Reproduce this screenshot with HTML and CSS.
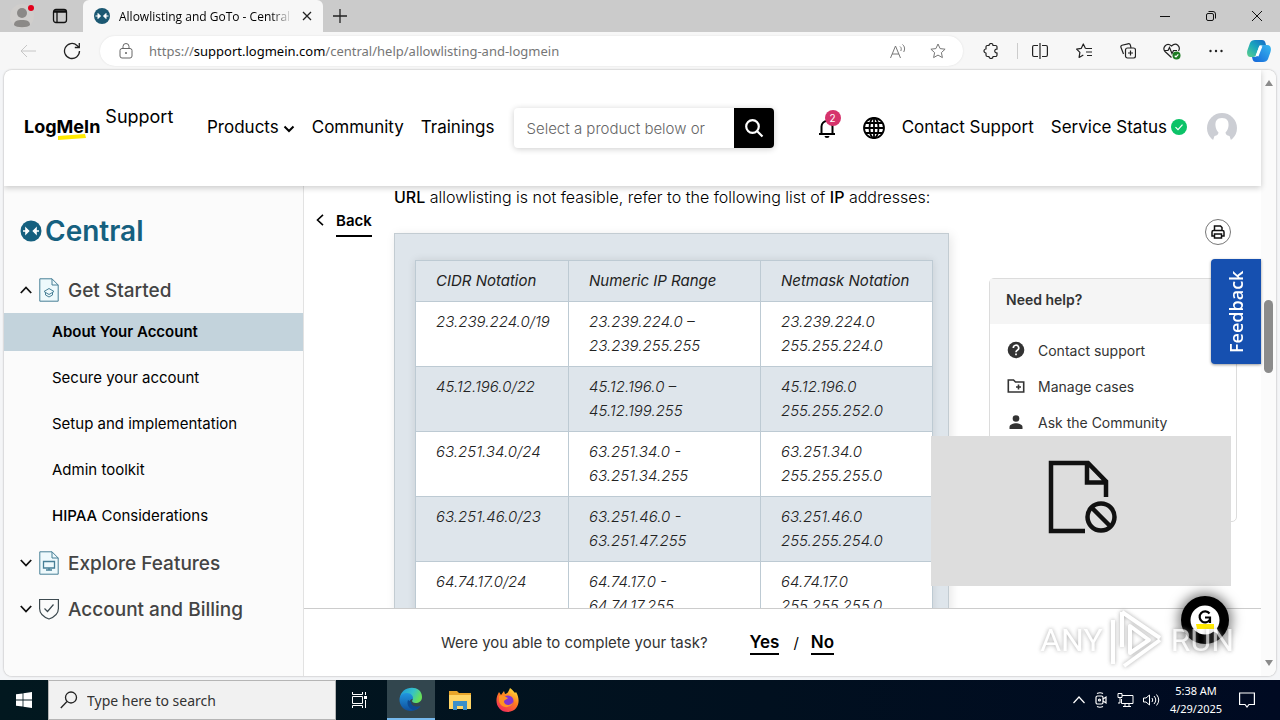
FILE: index.html
```html
<!DOCTYPE html>
<html lang="en">
<head>
    <meta charset="UTF-8">
    <meta name="viewport" content="width=device-width, initial-scale=1.0">
    <title>Allowlisting and GoTo - Central Support</title>
    <link rel="stylesheet" href="styles.css">
</head>
<body>
    <!-- Tab strip -->
    <div class="tab-strip">
        <button class="strip-button profile" aria-label="Profile">
            <svg width="24" height="28" viewBox="0 0 24 28"><circle cx="12" cy="14" r="12" fill="#d0cecc"/><circle cx="12" cy="11" r="5" fill="#8b8987"/><path d="M4 23c0-4 3-5 8-5s8 1 8 5c-2 3-14 3-16 0z" fill="#8b8987"/><circle cx="21" cy="6" r="3" fill="#e3001b"/></svg>
        </button>
        <button class="strip-button" aria-label="Tab actions">
            <svg width="16" height="16" viewBox="0 0 16 16" fill="none" stroke="#111" stroke-width="1.3"><rect x="1.5" y="1.5" width="13" height="13" rx="2.5"/><path d="M1.5 4h13M2 3h12M5 4v10"/></svg>
        </button>
        <div class="tab">
            <svg width="16" height="16" viewBox="0 0 16 16"><circle cx="8" cy="8" r="8" fill="#1b5872"/><path d="M1.500 8H6M4 5.500L6.500 8 4 10.500zM14.500 8H10M12 5.500L9.500 8l2.500 2.500z" fill="#fff" stroke="#fff"/></svg>
            <span class="tab-title">Allowlisting and GoTo - Central Support</span>
            <button class="tab-close" aria-label="Close tab">
                <svg width="10" height="10" viewBox="0 0 10 10" stroke="#222" stroke-width="1.3"><path d="M1 1l8 8M9 1l-8 8"/></svg>
            </button>
        </div>
        <button class="new-tab" aria-label="New tab">
            <svg width="14" height="14" viewBox="0 0 14 14" stroke="#222" stroke-width="1.3"><path d="M7 0v14M0 7h14"/></svg>
        </button>
        <div class="window-buttons">
            <button aria-label="Minimize"><svg width="10" height="10" viewBox="0 0 10 10" stroke="#111"><path d="M0 5.500h10"/></svg></button>
            <button aria-label="Restore"><svg width="10" height="10" viewBox="0 0 10 10" fill="none" stroke="#111"><rect x=".5" y="2.500" width="7" height="7" rx="1.500"/><path d="M2.500 .5H7a2.500 2.500 0 0 1 2.500 2.500v4.500"/></svg></button>
            <button aria-label="Close"><svg width="10" height="10" viewBox="0 0 10 10" stroke="#111"><path d="M0 0l10 10M10 0L0 10"/></svg></button>
        </div>
    </div>

    <!-- Toolbar -->
    <div class="toolbar">
        <button class="tool back-tool" aria-label="Back"><svg width="16" height="14" viewBox="0 0 16 14" fill="none" stroke="#c6c6c6"><path d="M16 7H1M7 1L1 7l6 6"/></svg></button>
        <button class="tool" aria-label="Refresh"><svg width="18" height="18" viewBox="0 0 18 18" fill="none" stroke="#222" stroke-width="1.300"><path d="M16.500 9A7.500 7.500 0 1 1 14 3.400l2 2M16.300 1v4.500h-4.500"/></svg></button>
        <div class="address">
            <svg width="14" height="16" viewBox="0 0 14 16" fill="none" stroke="#666"><rect x="1" y="5.500" width="12" height="9.500" rx="2"/><path d="M4 5.500V3.500a3 3 0 0 1 6 0v2"/><circle cx="7" cy="10" r=".6" fill="#666"/></svg>
            <a class="url" href="#">https://<b>support.logmein.com</b>/central/help/allowlisting-and-logmein</a>
            <button class="address-button" aria-label="Read aloud"><svg width="18" height="16" viewBox="0 0 18 16" fill="none" stroke="#777"><path d="M1.500 15L6.500 3l5 12M3 11h7M11 3.500c1.500 1 1.500 3 .8 4.500M13.500 1.500c2.500 2 2.500 5 1.200 7.500"/></svg></button>
            <button class="address-button" aria-label="Add to favorites"><svg width="16" height="16" viewBox="0 0 16 16" fill="none" stroke="#777"><path d="M8 1l2.100 4.600 5 .6-3.700 3.400 1 5L8 12.100l-4.400 2.500 1-5L.9 6.200l5-.6z" stroke-linejoin="round"/></svg></button>
        </div>
        <button class="tool" aria-label="Extensions"><svg width="16" height="16" viewBox="0 0 16 16" fill="none" stroke="#222" stroke-width="1.200"><path d="M4 2.500h2a2 2 0 0 1 4 0h2.500A1.500 1.500 0 0 1 14 4v2.200c-3-.7-3 4.300 0 3.600V12a1.500 1.500 0 0 1-1.500 1.500H10a2 2 0 0 1-4 0H4.500A1.500 1.500 0 0 1 3 12v-2a2 2 0 0 1 0-4V4a1.500 1.500 0 0 1 1-1.500z" stroke-linejoin="round"/></svg></button>
        <span class="tool-divider"></span>
        <button class="tool" aria-label="Split screen"><svg width="16" height="16" viewBox="0 0 16 16" fill="none" stroke="#222" stroke-width="1.200"><path d="M6 2.500H2A1.500 1.500 0 0 0 .6 4v8A1.500 1.500 0 0 0 2 13.500h4M10 2.500h4A1.500 1.500 0 0 1 15.400 4v8a1.500 1.500 0 0 1-1.400 1.500h-4M8 0v16"/></svg></button>
        <button class="tool" aria-label="Favorites"><svg width="17" height="16" viewBox="0 0 17 16" fill="none" stroke="#222" stroke-width="1.200"><path d="M9.500 5.500L7.300 1 5.200 5.400l-4.600.7 3.300 3.300-.8 5L7.300 12M9.500 5.500H16M10 9h6M11 12.500h5" stroke-linejoin="round"/></svg></button>
        <button class="tool" aria-label="Collections"><svg width="16" height="16" viewBox="0 0 16 16" fill="none" stroke="#222" stroke-width="1.200"><rect x="5.500" y="5" width="10" height="10" rx="2"/><path d="M10.500 7.500v5M8 10h5M3.500 11L1 4.500A1.800 1.800 0 0 1 2 2.200L8 .8a2 2 0 0 1 2.400 1.400L11 5"/></svg></button>
        <button class="tool" aria-label="Browser essentials"><svg width="18" height="17" viewBox="0 0 18 17" fill="none" stroke="#222" stroke-width="1.200"><path d="M8.500 14.500L2 8.500C-1 5 3.500-1.500 8.500 3c5-4.500 9.500 1 7 5M1.500 7.500H5l1.500-3 2.500 6 1.500-3H14"/><circle cx="13.500" cy="12.500" r="4" fill="#1c7b22" stroke="none"/><path d="M11.700 12.700l1.300 1.200 2.300-2.500" stroke="#fff"/></svg></button>
        <button class="tool" aria-label="Settings and more"><svg width="14" height="4" viewBox="0 0 14 4" fill="#222"><circle cx="1.500" cy="2" r="1.200"/><circle cx="7" cy="2" r="1.200"/><circle cx="12.500" cy="2" r="1.200"/></svg></button>
        <button class="tool copilot" aria-label="Copilot"><svg width="24" height="22" viewBox="0 0 24 22">
            <defs>
                <linearGradient id="cop1" x1="0" y1="1" x2="1" y2="0"><stop offset="0" stop-color="#5ed08b"/><stop offset=".5" stop-color="#1aa6bd"/><stop offset="1" stop-color="#1767c8"/></linearGradient>
                <linearGradient id="cop2" x1="0" y1="1" x2="1" y2="0"><stop offset="0" stop-color="#1464d8"/><stop offset="1" stop-color="#38b9f0"/></linearGradient>
            </defs>
            <path d="M8 0h7c2 0 3 1 3.500 3L19 5h-4c-2 0-3 1-3.500 3L9.500 14C9 16 8 17 6 17H3.500C0 17-.5 13 .5 10L3 3c.8-2 2.500-3 5-3z" fill="url(#cop1)"/>
            <path d="M16 22H9c-2 0-3-1-3.500-3L5 17h2.500c2 0 3-1 3.500-3l2-6c.5-2 1.500-3 3.500-3H20c4 0 4.500 4 3.500 7L21 19c-.8 2-2.500 3-5 3z" fill="url(#cop2)"/>
            <path d="M14 6L10 16" stroke="#fff" stroke-width="3"/></svg></button>
    </div>

    <!-- Web page -->
    <div class="window">
        <div class="page">
            <header class="site-header">
                <a class="brand" href="#"><span class="brand-name">LogMeIn<svg class="brand-mark" width="30" height="8" viewBox="0 0 30 8"><path d="M1 3l27-2 1 4-28 2z" fill="#ffe900"/></svg></span><span class="brand-section">Support</span></a>
                <nav class="site-nav">
                    <a href="#">Products<svg width="12" height="8" viewBox="0 0 12 8" fill="none" stroke="#000" stroke-width="2"><path d="M1.500 1.500L6 6l4.500-4.500"/></svg></a>
                    <a href="#">Community</a>
                    <a href="#">Trainings</a>
                </nav>
                <form class="site-search">
                    <input type="text" placeholder="Select a product below or" aria-label="Search">
                    <button type="button" aria-label="Search"><svg width="20" height="20" viewBox="0 0 20 20" fill="none" stroke="#fff" stroke-width="2.200"><circle cx="8.500" cy="8.500" r="6.300"/><path d="M13 13l5.500 5.500"/></svg></button>
                </form>
                <div class="site-tools">
                    <button class="bell" aria-label="Notifications"><svg width="18" height="20" viewBox="0 0 18 20" fill="none" stroke="#000" stroke-width="2"><path d="M1 16h16M3.500 16V8.500a5.500 5.500 0 0 1 11 0V16"/><path d="M6.500 18h5a2.500 2 0 0 1-5 0z" fill="#000" stroke="none"/></svg><span class="badge">2</span></button>
                    <button class="globe" aria-label="Language"><svg width="22" height="22" viewBox="0 0 22 22" fill="none" stroke="#000" stroke-width="1.800"><circle cx="11" cy="11" r="10"/><ellipse cx="11" cy="11" rx="4.500" ry="10"/><path d="M11 1v20M1 11h20M2.500 6h17M2.500 16h17"/></svg></button>
                    <a href="#">Contact Support</a>
                    <a class="status" href="#">Service Status<svg width="16" height="16" viewBox="0 0 16 16"><circle cx="8" cy="8" r="8" fill="#0cc368"/><path d="M4.500 8.200L7 10.700l4.500-5" fill="none" stroke="#fff" stroke-width="1.200"/></svg></a>
                    <svg class="avatar" width="30" height="30" viewBox="0 0 30 30"><circle cx="15" cy="15" r="15" fill="#ccced4"/><path d="M15 5c5 0 7 3 6.500 8-.3 3-1.500 5-3 6.500.3 2 1 2.700 4 3.500L25 30H5l2.500-7c3-.8 3.700-1.500 4-3.500-1.500-1.500-2.700-3.500-3-6.500C8 8 10 5 15 5z" fill="#fff"/></svg>
                </div>
            </header>

            <div class="site-body">
                <aside class="sidebar">
                    <a class="product" href="#"><svg width="22" height="22" viewBox="0 0 22 22"><circle cx="11" cy="11" r="10.500" fill="#15607f"/><path d="M3 11h4M6 8.500L8.500 11 6 13.500zM19 11h-4M16 8.500L13.500 11l2.500 2.500z" fill="#fff" stroke="#fff" stroke-width="1.600"/></svg>Central</a>
                    <button class="group">
                        <svg width="12" height="8" viewBox="0 0 12 8" fill="none" stroke="#111" stroke-width="1.800"><path d="M.8 7L6 1.500 11.200 7"/></svg>
                        <svg class="group-icon" width="20" height="24" viewBox="0 0 20 24" fill="#eef9fc" stroke="#477f96"><path d="M.8.800H13L19.200 7v16.200H.800z"/><path d="M13 .8V7h6.200M5 13.500l5-3 5 3-5 3zM6.500 14.500v2.500l3.500 2 3.500-2v-2.500" fill="none"/></svg>
                        Get Started
                    </button>
                    <a class="topic active" href="#">About Your Account</a>
                    <a class="topic" href="#">Secure your account</a>
                    <a class="topic" href="#">Setup and implementation</a>
                    <a class="topic" href="#">Admin toolkit</a>
                    <a class="topic" href="#"><span class="strong">HIPAA</span> Considerations</a>
                    <button class="group">
                        <svg width="12" height="8" viewBox="0 0 12 8" fill="none" stroke="#111" stroke-width="1.800"><path d="M.8 1L6 6.500 11.200 1"/></svg>
                        <svg class="group-icon" width="20" height="24" viewBox="0 0 20 24" fill="#eef9fc" stroke="#477f96"><path d="M.8.800H13L19.200 7v16.200H.800z"/><path d="M13 .8V7h6.200" fill="none"/><path d="M4.500 10.500h11v6.500h-11zM10 17v2M7 19h6" fill="none" stroke-width="1.300"/></svg>
                        Explore Features
                    </button>
                    <button class="group">
                        <svg width="12" height="8" viewBox="0 0 12 8" fill="none" stroke="#111" stroke-width="1.800"><path d="M.8 1L6 6.500 11.200 1"/></svg>
                        <svg class="group-icon" width="20" height="22" viewBox="0 0 20 22" fill="none" stroke="#3d4a50" stroke-width="1.200"><path d="M.6 1.500h18.800v9c0 5-4 8.500-9.400 10.500C4.600 19 .6 15.500.6 10.500z"/><path d="M5.500 10.500l3 3 6-7"/></svg>
                        Account and Billing
                    </button>
                </aside>

                <div class="main">
                    <div class="columns">
                        <a class="back" href="#"><svg width="8" height="12" viewBox="0 0 8 12" fill="none" stroke="#000" stroke-width="1.600"><path d="M7 .8L1.500 6 7 11.200"/></svg><span>Back</span></a>
                        <article class="article">
                            <p><span class="strong">URL</span> allowlisting is not feasible, refer to the following list of <span class="strong">IP</span> addresses:</p>
                            <div class="table-card">
                                <table>
                                    <thead>
                                        <tr><th>CIDR Notation</th><th>Numeric IP Range</th><th>Netmask Notation</th></tr>
                                    </thead>
                                    <tbody>
                                        <tr><td>23.239.224.0/19</td><td>23.239.224.0 –<br>23.239.255.255</td><td>23.239.224.0<br>255.255.224.0</td></tr>
                                        <tr><td>45.12.196.0/22</td><td>45.12.196.0 –<br>45.12.199.255</td><td>45.12.196.0<br>255.255.252.0</td></tr>
                                        <tr><td>63.251.34.0/24</td><td>63.251.34.0 -<br>63.251.34.255</td><td>63.251.34.0<br>255.255.255.0</td></tr>
                                        <tr><td>63.251.46.0/23</td><td>63.251.46.0 -<br>63.251.47.255</td><td>63.251.46.0<br>255.255.254.0</td></tr>
                                        <tr><td>64.74.17.0/24</td><td>64.74.17.0 -<br>64.74.17.255</td><td>64.74.17.0<br>255.255.255.0</td></tr>
                                    </tbody>
                                </table>
                            </div>
                        </article>
                        <div class="side">
                            <button class="print" aria-label="Print"><svg width="14" height="14" viewBox="0 0 14 14" fill="none" stroke="#111" stroke-width="1.500"><path d="M3.500 5V1h6L11 2.500V5M3.500 11H1V7a1.500 1.500 0 0 1 1.500-1.500h9A1.500 1.500 0 0 1 13 7v4h-2.500"/><rect x="3.500" y="9" width="7" height="4"/></svg></button>
                            <section class="help">
                                <h2>Need help?</h2>
                                <a href="#"><svg width="18" height="18" viewBox="0 0 18 18"><circle cx="9" cy="9" r="8.300" fill="#333"/><path d="M6.300 7a2.700 2.700 0 1 1 4 2.300c-1 .6-1.300 1-1.300 2M9 12.500v1.800" fill="none" stroke="#fff" stroke-width="1.700"/></svg>Contact support</a>
                                <a href="#"><svg width="18" height="18" viewBox="0 0 18 18" fill="none" stroke="#333" stroke-width="1.600"><path d="M1.300 15V3h5.200l2 2h8.200v10zM11.500 7.500v5M9 10h5"/></svg>Manage cases</a>
                                <a href="#"><svg width="18" height="18" viewBox="0 0 18 18" fill="#333"><circle cx="9" cy="5.500" r="3.300"/><path d="M2.500 16v-2c0-2.500 4-3.700 6.500-3.700s6.500 1.200 6.500 3.700v2z"/></svg>Ask the Community</a>
                            </section>
                        </div>
                    </div>
                    <div class="task-bar">
                        <span>Were you able to complete your task?</span>
                        <a class="yes" href="#">Yes</a><span class="slash">/</span><a href="#">No</a>
                    </div>
                </div>
            </div>
        </div>
        <div class="scrollbar">
            <svg width="10" height="6" viewBox="0 0 10 6"><path d="M1 6L5 0l4 6z" fill="#8b8b8b"/></svg>
            <div class="thumb"></div>
            <svg width="10" height="6" viewBox="0 0 10 6"><path d="M1 0h8L5 6z" fill="#8b8b8b"/></svg>
        </div>

        <button class="feedback">Feedback</button>
        <div class="blocked">
            <svg width="70" height="76" viewBox="0 0 70 76" fill="none" stroke="#111" stroke-width="4.500"><path d="M37 71H3V3h37l18 18.500V37M39 3v19.500h19"/><circle cx="53" cy="57" r="13.500"/><path d="M43.500 47.500l19 19"/></svg>
        </div>
        <button class="chat" aria-label="Chat">
            <svg width="30" height="30" viewBox="0 0 30 30"><circle cx="15" cy="15" r="14.500" fill="#fff"/><path d="M19 24l8-1 1 6z" fill="#fff"/><path d="M6 19h18v5H7z" fill="#ffe900"/><path d="M19.500 8.500a5.500 5.500 0 1 0 .5 6v-2h-5M20 12v6" fill="none" stroke="#000" stroke-width="2.200"/></svg>
        </button>
        <div class="watermark">
            <span>ANY</span>
            <svg width="64" height="64" viewBox="0 0 64 64" fill="none" stroke="#fff" stroke-width="4" stroke-linejoin="round"><path d="M17 14v25M17 4v22M17 4l38 26M55 32L19 58M8 12v44M25 18v27l19-13z"/></svg>
            <span>RUN</span>
        </div>
    </div>

    <!-- Taskbar -->
    <div class="taskbar">
        <button class="start" aria-label="Start"><svg width="16" height="16" viewBox="0 0 16 16" fill="#fff"><path d="M0 2.300l6.600-.9v6.200H0zM7.400 1.300L16 0v7.600H7.400zM0 8.400h6.600v6.200L0 13.700zM7.400 8.400H16V16l-8.600-1.200z"/></svg></button>
        <label class="os-search">
            <svg width="18" height="18" viewBox="0 0 18 18" fill="none" stroke="#222" stroke-width="1.300"><circle cx="11" cy="6.500" r="5.500"/><path d="M7 10.500L.8 17"/></svg>
            <input type="text" placeholder="Type here to search" aria-label="Type here to search">
        </label>
        <button class="app" aria-label="Task view"><svg width="16" height="16" viewBox="0 0 16 16" fill="none" stroke="#fff"><path d="M.5 0v2.500h10V0M.5 16v-2.500h10V16M.5 4.500h10v7H.5zM13.500 0v3M13.500 8v8"/><path d="M12 4h3v3h-3z" fill="#fff" stroke="none"/></svg></button>
        <button class="app open" aria-label="Edge"><svg width="24" height="24" viewBox="0 0 24 24">
            <defs>
                <linearGradient id="edge1" x1="0" y1="0" x2="1" y2=".4"><stop offset="0" stop-color="#1c96dc"/><stop offset=".6" stop-color="#35c1c8"/><stop offset="1" stop-color="#66e05a"/></linearGradient>
                <linearGradient id="edge2" x1="0" y1="0" x2="0" y2="1"><stop offset="0" stop-color="#2196e0"/><stop offset="1" stop-color="#0f4f9c"/></linearGradient>
            </defs>
            <path d="M1 12C1-2 23-3 23 10c0 4-3 6-6.500 6-3 0-4-1.500-3-3C15 10 10 6 1 12z" fill="url(#edge1)"/>
            <path d="M.5 12C1 7 5 6 8 6c4 0 6.500 3 6 6-3-1-6 5 0 8 3 1 5.500 0 7.500-1-3 4-7 5-10.500 5C4 23.500.3 18 .5 12z" fill="url(#edge2)"/>
            <path d="M9 13c-2 5 2 9.500 6 10 3-.5 5-2 6.500-4-3 1-9 1-9.500-4z" fill="#0d4a93"/></svg></button>
        <button class="app" aria-label="File Explorer"><svg width="22" height="20" viewBox="0 0 22 20"><path d="M0 1h8l2 2h12v16H0z" fill="#e8a52a"/><path d="M0 5h22v14H0z" fill="#ffd566"/><path d="M4 11h14v9h-4v-4H8v4H4z" fill="#3b8fc9"/></svg></button>
        <button class="app" aria-label="Firefox"><svg width="24" height="24" viewBox="0 0 24 24">
            <defs>
                <linearGradient id="fox" x1=".8" y1="0" x2=".2" y2="1"><stop offset="0" stop-color="#ffe53b"/><stop offset=".45" stop-color="#ff7a1f"/><stop offset="1" stop-color="#f0265f"/></linearGradient>
            </defs>
            <path d="M14 0c3 2 4 4 5 5l1-1c5 8 3 19-8 20C2 24-2 14 2 6l1-2 2 3 3-4 1 3c3 0 4-4 5-6z" fill="url(#fox)"/><circle cx="12" cy="13" r="5.500" fill="#8134d1"/><path d="M3 8c4-2 6 1 9 2-1 2-4 1-4 4 1 4 7 4 9 0 0 6-12 8-14-1z" fill="#ff9322"/></svg></button>
        <div class="tray">
            <svg width="12" height="8" viewBox="0 0 12 8" fill="none" stroke="#fff" stroke-width="1.200"><path d="M.5 7L6 1l5.500 6"/></svg>
            <svg width="14" height="16" viewBox="0 0 14 16" fill="none" stroke="#fff" stroke-width="1.200"><rect x="2" y="4" width="7" height="8" rx="1.500"/><path d="M9 7l3-2v6L9 9M3 1.500q3-1.500 6 0M3 14.500q3 1.500 6 0"/><circle cx="5.500" cy="8" r="1"/></svg>
            <svg width="17" height="14" viewBox="0 0 17 14" fill="none" stroke="#fff"><path d="M5 2.500h11v8H4.500V6M8 10.500v3M12 10.500v3M6 13.500h8M1 .5h4v4H1zM3 4.500V10h-2"/></svg>
            <svg width="17" height="14" viewBox="0 0 17 14" fill="none" stroke="#fff"><path d="M.5 5v4H3l3.500 3V2L3 5zM9 5q1.500 2 0 4M11 3q3.500 4 0 8M13.500 1.500q4.500 5.500 0 11"/></svg>
            <div class="clock"><span>5:38 AM</span><span>4/29/2025</span></div>
            <svg class="notes" width="16" height="16" viewBox="0 0 16 16" fill="none" stroke="#fff" stroke-width="1.200"><path d="M.6 1h14.800v11.500H10l-2 2.500-2-2.500H.6z"/></svg>
        </div>
    </div>
</body>
</html>
```
FILE: styles.css
```css
* {
    box-sizing: border-box;
}

body {
    margin: 0;
    height: 100vh;
    display: flex;
    flex-direction: column;
    overflow: hidden;
    background: #f4f5f7;
    font-family: Inter, "Liberation Sans", sans-serif;
    font-size: 16px;
    color: #000;
}

button {
    border: 0;
    padding: 0;
    background: none;
    font-family: inherit;
    color: inherit;
    display: flex;
    align-items: center;
    justify-content: center;
}

input {
    border: 0;
    padding: 0;
    min-width: 0;
    background: none;
    font-family: inherit;
    outline: 0;
}

a {
    color: inherit;
    text-decoration: none;
}

svg {
    flex-shrink: 0;
}

.strong {
    font-weight: 500;
}

/* Browser chrome */
.tab-strip {
    flex: 0 0 32px;
    display: flex;
    background: #cbcbcb;
    font-family: "Open Sans", sans-serif;
}

.strip-button {
    width: 38px;
}

.profile {
    width: 41px;
    padding-left: 3px;
}

.tab {
    width: 240px;
    margin-left: 4px;
    padding: 0 10px 0 11px;
    display: flex;
    align-items: center;
    gap: 9px;
    background: #f7f7f7;
    border-radius: 6px 6px 0 0;
}

.tab-title {
    flex: 1;
    overflow: hidden;
    white-space: nowrap;
    font-size: 12px;
    -webkit-mask-image: linear-gradient(to right, #000 88%, transparent);
    mask-image: linear-gradient(to right, #000 88%, transparent);
}

.tab-close {
    width: 12px;
    height: 20px;
}

.new-tab {
    width: 34px;
}

.window-buttons {
    margin-left: auto;
    display: flex;
}

.window-buttons button {
    width: 46px;
}

.toolbar {
    flex: 0 0 38px;
    display: flex;
    align-items: center;
    background: #f7f7f7;
    font-family: "Noto Sans", sans-serif;
}

.tool {
    width: 44px;
    height: 30px;
}

.back-tool {
    margin-left: 6px;
}

.address {
    flex: 1;
    height: 30px;
    margin: 0 6px;
    padding: 0 5px 0 19px;
    display: flex;
    align-items: center;
    background: #fff;
    border-radius: 15px;
    box-shadow: 0 0 2px #ddd;
}

.url {
    flex: 1;
    margin-left: 16px;
    font-size: 13px;
    color: #767676;
}

.url b {
    font-weight: 400;
    color: #000;
}

.address-button {
    width: 40px;
    height: 30px;
}

.tool-divider {
    width: 1px;
    height: 16px;
    margin: 0 0 0 4px;
    background: #ccc;
}

.copilot {
    width: 42px;
}

/* Page frame */
.window {
    position: relative;
    flex: 1;
    min-height: 0;
    margin: 0 4px 4px;
    display: flex;
    overflow: hidden;
    background: #fff;
    border-radius: 8px;
    box-shadow: 0 0 2px #999;
}

.page {
    flex: 1;
    min-width: 0;
    display: flex;
    flex-direction: column;
}

.scrollbar {
    width: 15px;
    padding: 10px 0;
    display: flex;
    flex-direction: column;
    align-items: center;
    background: #fbfbfb;
}

.thumb {
    width: 9px;
    height: 73px;
    margin: 214px 0 auto;
    background: #8b8b8b;
    border-radius: 5px;
}

/* Site header */
.site-header {
    z-index: 1;
    flex: 0 0 116px;
    padding: 0 24px 0 20px;
    display: flex;
    align-items: center;
    background: #fff;
    box-shadow: 0 2px 6px rgba(0, 0, 0, 0.2);
    font-size: 17px;
}

.brand {
    width: 183px;
    padding-bottom: 4px;
    display: flex;
    align-items: center;
    gap: 5px;
}

.brand-name {
    position: relative;
    font-size: 18px;
    font-weight: 700;
}

.brand-mark {
    position: absolute;
    z-index: -1;
    left: 33px;
    bottom: -4px;
}

.brand-section {
    padding-bottom: 20px;
    font-size: 18px;
}

.site-nav {
    padding-bottom: 2px;
    display: flex;
    gap: 17px;
}

.site-nav svg {
    margin-left: 4px;
}

.site-search {
    width: 260px;
    height: 40px;
    margin-left: 20px;
    display: flex;
    border-radius: 4px;
    box-shadow: 0 1px 6px rgba(0, 0, 0, 0.2);
    overflow: hidden;
}

.site-search input {
    flex: 1;
    padding-left: 12px;
    font-size: 15px;
    font-weight: 300;
}

.site-search input::placeholder {
    color: #666;
}

.site-search button {
    width: 40px;
    background: #000;
}

.site-tools {
    margin-left: auto;
    display: flex;
    align-items: center;
    gap: 17px;
}

.site-tools a {
    padding-bottom: 2px;
}

.bell {
    position: relative;
    margin-right: 10px;
}

.badge {
    position: absolute;
    left: 7px;
    top: -8px;
    width: 16px;
    height: 16px;
    border-radius: 8px;
    background: #d6336c;
    color: #fff;
    font-size: 10px;
    line-height: 16px;
}

.status {
    margin-right: 3px;
    display: flex;
    align-items: center;
    gap: 4px;
}

/* Sidebar */
.site-body {
    flex: 1;
    min-height: 0;
    display: flex;
}

.sidebar {
    width: 300px;
    padding-top: 28px;
    background: #fbfbfb;
    border-right: 1px solid #e2e2e2;
}

.product {
    height: 34px;
    margin-bottom: 19px;
    padding-left: 16px;
    display: flex;
    align-items: center;
    gap: 3px;
    font-size: 28px;
    font-weight: 600;
    color: #15607f;
}

.group {
    height: 46px;
    padding-left: 16px;
    font-size: 19px;
    font-weight: 500;
    color: #444;
}

.group-icon {
    margin: 0 9px 0 7px;
}

.topic {
    display: block;
    height: 38px;
    margin-bottom: 8px;
    padding-left: 48px;
    font-size: 15px;
    line-height: 38px;
}

.topic:last-of-type {
    margin-bottom: 5px;
}

.active {
    background: #c3d3dc;
    font-weight: 600;
}

/* Article */
.main {
    flex: 1;
    min-width: 0;
    display: flex;
    flex-direction: column;
}

.columns {
    flex: 1;
    min-height: 0;
    display: flex;
    overflow: hidden;
}

.back {
    width: 90px;
    padding: 23px 0 0 12px;
    display: flex;
    align-items: flex-start;
    gap: 12px;
    font-size: 15px;
    font-weight: 600;
    line-height: 24px;
}

.back svg {
    margin-top: 5px;
}

.back span {
    padding-bottom: 2px;
    border-bottom: 2px solid #000;
}

.article {
    flex: 1;
    font-size: 16px;
    font-weight: 300;
    line-height: 22px;
}

.article p {
    margin: 0 0 25px;
    white-space: nowrap;
}

.table-card {
    padding: 26px 15px 26px 20px;
    background: #dee5eb;
    border: 1px solid #c3ccd2;
    box-shadow: 2px 2px 10px rgba(0, 0, 0, 0.1);
}

table {
    width: 100%;
    table-layout: fixed;
    border-collapse: collapse;
    background: #fff;
    color: #222;
    font-size: 15px;
    font-style: italic;
    line-height: 24px;
    box-shadow: 0 0 8px rgba(0, 0, 0, 0.1);
}

th,
td {
    padding: 8px 20px;
    border: 1px solid #bdcad3;
    text-align: left;
    vertical-align: top;
    white-space: nowrap;
}

th {
    font-weight: 400;
}

th:nth-child(1) {
    width: 153px;
}

th:nth-child(2) {
    width: 192px;
}

thead tr,
tbody tr:nth-child(even) {
    background: #dee5eb;
}

.side {
    width: 272px;
    margin-left: 40px;
    padding: 33px 24px 0 0;
}

.print {
    width: 26px;
    height: 26px;
    margin: 0 6px 33px auto;
    border: 1px solid #777;
    border-radius: 13px;
}

.help {
    height: 244px;
    border: 1px solid #dcdcdc;
    border-radius: 5px;
    color: #333;
    font-size: 14px;
}

.help h2 {
    height: 45px;
    margin: 0 0 8px;
    padding-left: 16px;
    background: #f5f5f5;
    font-size: 14px;
    font-weight: 600;
    line-height: 42px;
}

.help a {
    height: 36px;
    padding-left: 17px;
    display: flex;
    align-items: center;
    gap: 13px;
}

.task-bar {
    flex: 0 0 68px;
    padding-left: 137px;
    display: flex;
    align-items: center;
    background: #fff;
    border-top: 1px solid #ccc;
    font-size: 15px;
    color: #333;
}

.task-bar a {
    border-bottom: 2px solid #000;
    font-size: 17px;
    font-weight: 600;
    line-height: 22px;
    color: #000;
}

.task-bar .yes {
    margin-left: 42px;
}

.slash {
    margin: 0 12px 0 14px;
    color: #000;
}

/* Floating widgets */
.feedback {
    position: absolute;
    right: 15px;
    top: 189px;
    width: 50px;
    height: 105px;
    z-index: 1;
    writing-mode: vertical-rl;
    transform: rotate(180deg);
    background: #1650b0;
    border-radius: 0 4px 4px 0;
    box-shadow: 0 -1px 3px rgba(0, 0, 0, 0.4);
    color: #fff;
    font-family: "Open Sans", sans-serif;
    font-size: 18px;
    font-weight: 600;
}

.blocked {
    position: absolute;
    right: 45px;
    bottom: 90px;
    width: 300px;
    height: 150px;
    padding: 24px 0 0 117px;
    background: #ddd;
}

.chat {
    position: absolute;
    right: 47px;
    bottom: 32px;
    width: 48px;
    height: 48px;
    border-radius: 24px;
    background: #000;
    box-shadow: 0 0 12px 3px rgba(0, 0, 0, 0.5);
}

.watermark {
    position: absolute;
    right: 42px;
    bottom: 4px;
    display: flex;
    align-items: center;
    gap: 2px;
    color: #fff;
    font-family: Roboto, sans-serif;
    font-size: 32px;
    opacity: 0.7;
    filter: drop-shadow(0 0 2px #888);
}

/* OS taskbar */
.taskbar {
    flex: 0 0 40px;
    display: flex;
    background: linear-gradient(to right, #02181f, #01101f 60%, #000a22);
    font-family: "Noto Sans", sans-serif;
    color: #fff;
}

.start,
.app {
    width: 48px;
}

.open {
    margin: 0 1px 0 3px;
    background: #32464e;
    border-bottom: 2px solid #76b9ed;
}

.os-search {
    width: 288px;
    padding-left: 11px;
    display: flex;
    align-items: center;
    gap: 9px;
    background: #f1f1f1;
    border: 1px solid #b5b5b5;
}

.os-search input {
    flex: 1;
    font-size: 14px;
}

.os-search input::placeholder {
    color: #333;
}

.tray {
    margin-left: auto;
    padding-right: 25px;
    display: flex;
    align-items: center;
    gap: 9px;
}

.clock {
    width: 54px;
    display: flex;
    flex-direction: column;
    align-items: center;
    font-size: 11px;
    line-height: 18px;
}

.notes {
    margin-left: 7px;
}
```
